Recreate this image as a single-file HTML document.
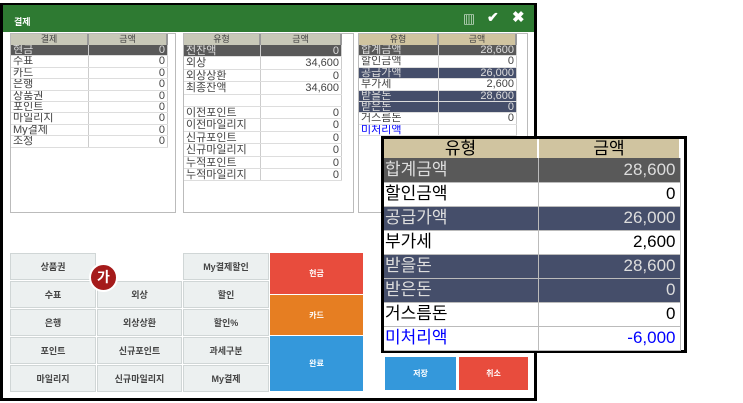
<!DOCTYPE html><html><head><meta charset="utf-8"><style>
*{margin:0;padding:0;box-sizing:border-box}
body{width:743px;height:403px;background:#fff;position:relative;overflow:hidden;font-family:"Liberation Sans","Noto Sans CJK KR",sans-serif}
.abs{position:absolute}
.win{left:0;top:3px;width:537px;height:398px;border:3px solid #000;background:#fff}
.title{left:3px;top:5px;width:531px;height:27px;background:#2e7a32;color:#fff;font-size:9px;font-weight:bold;padding:10px 0 0 11px}
.tb{font-size:11px;color:#444}
.row{display:flex;height:11.4px;line-height:11px;border-bottom:1px solid #ddd;overflow:hidden;white-space:nowrap}
.mid .row{height:12.4px;line-height:12px}
.row>div{padding:0 2px;border-right:1px solid #ccc;overflow:hidden}
.row>div:first-child{flex:0 0 var(--c)}
.row>div:last-child{flex:1;text-align:right}
.hd{display:flex;height:11px;font-size:9px;line-height:11px;text-align:center}
.hd>div{background:#c8c8b8;border-right:2px solid #999}
.hd>div:first-child{flex:0 0 var(--c)}
.hd>div:last-child{flex:1}
.dk{background:#595959;color:#ddd}
.nv{background:#454e6a;color:#ddd}
.panel{border:1px solid #bbb}
.btn{position:absolute;background:#ecf0f0;border:1px solid #d0d6d6;font-size:9px;color:#444;font-weight:bold;display:flex;align-items:center;justify-content:center}
.cb{position:absolute;color:#fff;font-size:8px;font-weight:bold;display:flex;align-items:center;justify-content:center}
.pop{left:381px;top:136px;width:306px;height:217px;border:3px solid #000;background:#fff}
.pop table{font-size:17px;color:#000;width:297px;border-collapse:collapse}
.pop tr{height:24px}
.pop td{height:24px;line-height:22px;border-bottom:1px solid #bbb;border-right:1px solid #bbb;padding:0 4px 0 1px;white-space:nowrap}
.pop th{height:19px;font-size:17px;font-weight:normal;background:#d0c4a0;border-right:2px solid #fff;line-height:17px;color:#000}
.r{text-align:right}
.pop .dk td{background:#595959;color:#ddd}
.pop .nv td{background:#454e6a;color:#ddd}
</style></head><body>
<div class="abs win"></div>
<div class="abs title">결제</div>
<div class="abs" style="left:463px;top:11px;color:#fff;font-size:12px;font-weight:bold">▥</div>
<div class="abs" style="left:487px;top:9px;color:#fff;font-size:14px;font-weight:bold">✔</div>
<div class="abs" style="left:512px;top:8px;color:#fff;font-size:15px;font-weight:bold">✖</div>

<div class="abs panel tb" style="left:10px;top:33px;width:166px;height:180px;--c:78px">
<div style="width:157px">
<div class="hd"><div>결제</div><div>금액</div></div>
<div class="row dk"><div>현금</div><div>0</div></div>
<div class="row"><div>수표</div><div>0</div></div>
<div class="row"><div>카드</div><div>0</div></div>
<div class="row"><div>은행</div><div>0</div></div>
<div class="row"><div>상품권</div><div>0</div></div>
<div class="row"><div>포인트</div><div>0</div></div>
<div class="row"><div>마일리지</div><div>0</div></div>
<div class="row"><div>My결제</div><div>0</div></div>
<div class="row"><div>조정</div><div>0</div></div>
</div></div>

<div class="abs panel tb mid" style="left:183px;top:33px;width:171px;height:180px;--c:77px">
<div style="width:158px">
<div class="hd"><div>유형</div><div>금액</div></div>
<div class="row dk"><div>전잔액</div><div>0</div></div>
<div class="row"><div>외상</div><div>34,600</div></div>
<div class="row"><div>외상상환</div><div>0</div></div>
<div class="row"><div>최종잔액</div><div>34,600</div></div>
<div class="row"><div></div><div></div></div>
<div class="row"><div>이전포인트</div><div>0</div></div>
<div class="row"><div>이전마일리지</div><div>0</div></div>
<div class="row"><div>신규포인트</div><div>0</div></div>
<div class="row"><div>신규마일리지</div><div>0</div></div>
<div class="row"><div>누적포인트</div><div>0</div></div>
<div class="row"><div>누적마일리지</div><div>0</div></div>
</div></div>

<div class="abs panel tb" style="left:358px;top:33px;width:170px;height:180px;--c:80px">
<div style="width:158px">
<div class="hd"><div style="background:#d0c4a0">유형</div><div style="background:#d0c4a0">금액</div></div>
<div class="row dk"><div>합계금액</div><div>28,600</div></div>
<div class="row"><div>할인금액</div><div>0</div></div>
<div class="row nv"><div>공급가액</div><div>26,000</div></div>
<div class="row"><div>부가세</div><div>2,600</div></div>
<div class="row nv"><div>받을돈</div><div>28,600</div></div>
<div class="row nv"><div>받은돈</div><div>0</div></div>
<div class="row"><div>거스름돈</div><div>0</div></div>
<div class="row"><div style="color:#00f">미처리액</div><div></div></div>
</div></div>

<div class="btn" style="left:10px;top:253px;width:86px;height:27px">상품권</div>
<div class="btn" style="left:183px;top:253px;width:86px;height:27px">My결제할인</div>
<div class="btn" style="left:10px;top:281px;width:86px;height:27px">수표</div>
<div class="btn" style="left:97px;top:281px;width:85px;height:27px">외상</div>
<div class="btn" style="left:183px;top:281px;width:86px;height:27px">할인</div>
<div class="btn" style="left:10px;top:309px;width:86px;height:27px">은행</div>
<div class="btn" style="left:97px;top:309px;width:85px;height:27px">외상상환</div>
<div class="btn" style="left:183px;top:309px;width:86px;height:27px">할인%</div>
<div class="btn" style="left:10px;top:337px;width:86px;height:27px">포인트</div>
<div class="btn" style="left:97px;top:337px;width:85px;height:27px">신규포인트</div>
<div class="btn" style="left:183px;top:337px;width:86px;height:27px">과세구분</div>
<div class="btn" style="left:10px;top:365px;width:86px;height:27px">마일리지</div>
<div class="btn" style="left:97px;top:365px;width:85px;height:27px">신규마일리지</div>
<div class="btn" style="left:183px;top:365px;width:86px;height:27px">My결제</div>
<div class="cb" style="left:270px;top:253px;width:93px;height:41px;background:#e84c3d">현금</div>
<div class="cb" style="left:270px;top:295px;width:93px;height:40px;background:#e67e22">카드</div>
<div class="cb" style="left:270px;top:336px;width:93px;height:55px;background:#3498db">완료</div>
<div class="cb" style="left:385px;top:357px;width:71px;height:33px;background:#3498db">저장</div>
<div class="cb" style="left:459px;top:357px;width:69px;height:33px;background:#e84c3d">취소</div>
<div class="abs" style="left:89px;top:263px;width:29px;height:29px;border-radius:50%;background:#a51b1b;border:2px solid #fff;color:#fff;font-size:14px;font-weight:bold;text-align:center;line-height:25px">가</div>

<div class="abs pop"><table><tr style="height:19px"><th style="width:154px">유형</th><th>금액</th></tr>
<tr class="dk"><td>합계금액</td><td class="r">28,600</td></tr>
<tr><td>할인금액</td><td class="r">0</td></tr>
<tr class="nv"><td>공급가액</td><td class="r">26,000</td></tr>
<tr><td>부가세</td><td class="r">2,600</td></tr>
<tr class="nv"><td>받을돈</td><td class="r">28,600</td></tr>
<tr class="nv"><td>받은돈</td><td class="r">0</td></tr>
<tr><td>거스름돈</td><td class="r">0</td></tr>
<tr><td style="color:#00f">미처리액</td><td class="r" style="color:#00f">-6,000</td></tr></table></div>
</body></html>
